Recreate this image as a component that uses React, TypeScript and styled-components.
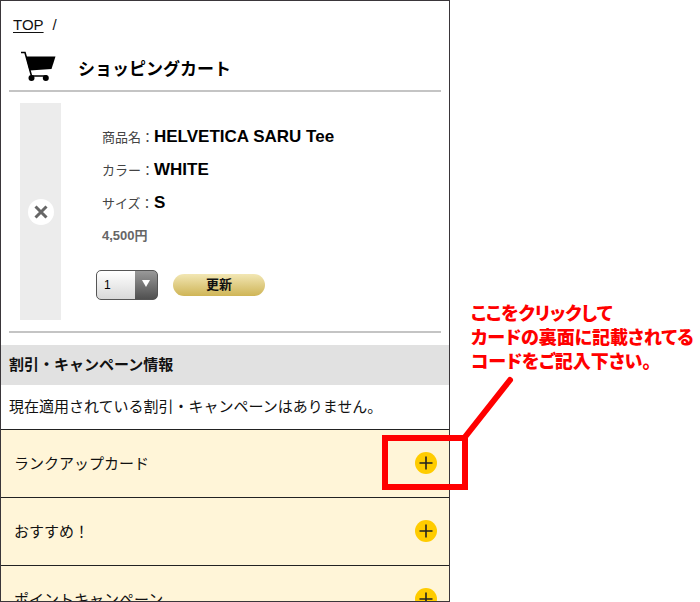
import React from "react";
import styled, { createGlobalStyle } from "styled-components";

const GlobalStyle = createGlobalStyle`
  *, *::before, *::after { box-sizing: border-box; }
  body {
    margin: 0;
    background: #fff;
    color: #111;
    font-family: "Liberation Sans", "Noto Sans CJK JP", sans-serif;
    font-size: 15px;
  }
  h1, h2, p, dl, dd, ul { margin: 0; padding: 0; }
`;

const Page = styled.div`
  display: grid;
  grid-template-columns: 9fr 5fr;
  height: 100vh;
`;

const Screen = styled.main`
  position: relative;
  z-index: 1;
  min-width: 0;
  height: 100vh;
  border: 1px solid #3a363a;
  overflow-x: visible;
  overflow-y: clip;
`;

const Breadcrumb = styled.nav`
  display: flex;
  gap: 9px;
  padding: 12px 12px 0;
  line-height: 24px;
`;

const CrumbLink = styled.a`
  color: #111;
  text-underline-offset: 2px;
`;

const TitleBar = styled.header`
  display: flex;
  align-items: flex-end;
  gap: 22px;
  margin: 0 8px;
  padding: 14px 0 9px 11px;
  border-bottom: 2px solid #c4c4c4;
`;

const Title = styled.h1`
  font-size: 17px;
  line-height: 22px;
  font-weight: 700;
  color: #000;
`;

const Product = styled.section`
  display: flex;
  margin: 0 8px;
  padding: 11px 0 11px 11px;
  border-bottom: 2px solid #c4c4c4;
`;

const RemoveButton = styled.button`
  display: flex;
  align-items: center;
  justify-content: center;
  width: 41px;
  padding: 0;
  border: 0;
  background: #ececec;
  cursor: pointer;
`;

const Details = styled.div`
  padding: 17px 0 20px 35px;
`;

const Specs = styled.dl`
  padding-left: 6px;
`;

const Spec = styled.div`
  display: flex;
  align-items: baseline;
  height: 33px;
  line-height: 33px;
`;

const SpecName = styled.dt`
  width: 52px;
  font-size: 13px;
  color: #444;
  white-space: nowrap;
`;

const SpecValue = styled.dd`
  font-size: 17px;
  font-weight: 700;
  color: #000;
`;

const Price = styled.p`
  height: 33px;
  padding-left: 6px;
  font-size: 13px;
  line-height: 33px;
  font-weight: 700;
  color: #666;
`;

const QuantityForm = styled.form`
  display: flex;
  align-items: center;
  gap: 15px;
  margin-top: 18px;
`;

const QuantityBox = styled.label`
  position: relative;
  display: block;
  width: 62px;
  height: 30px;
`;

const Quantity = styled.select`
  width: 100%;
  height: 100%;
  padding: 0 0 0 7px;
  appearance: none;
  border: 1px solid #555;
  border-radius: 5px;
  background:
    linear-gradient(#999, #505050) right / 22px 100% no-repeat,
    linear-gradient(#fff, #d8d8d8);
  color: #000;
  font-family: inherit;
  font-size: 12px;
`;

const Arrow = styled.svg`
  position: absolute;
  top: 10px;
  right: 8px;
  pointer-events: none;
`;

const UpdateButton = styled.button`
  width: 92px;
  height: 22px;
  padding: 0;
  border: 0;
  border-radius: 11px;
  background: linear-gradient(#f2e7b4, #e0cd85 50%, #cfb556);
  color: #111;
  font-family: inherit;
  font-size: 13px;
  line-height: 22px;
  font-weight: 700;
  cursor: pointer;
`;

const SectionTitle = styled.h2`
  margin-top: 12px;
  padding: 0 8px;
  background: #e1e1e1;
  font-size: 15px;
  line-height: 40px;
  font-weight: 700;
`;

const Message = styled.p`
  padding: 0 8px;
  line-height: 44px;
  white-space: nowrap;
`;

const Campaigns = styled.ul`
  list-style: none;
`;

const CampaignItem = styled.li`
  position: relative;
  border-top: 1px solid #222;
`;

const CampaignButton = styled.button`
  display: flex;
  align-items: center;
  justify-content: space-between;
  width: 100%;
  height: 67px;
  padding: 0 12px 2px 13px;
  border: 0;
  background: #fff5d8;
  color: #111;
  font-family: inherit;
  font-size: 15px;
  text-align: left;
  cursor: pointer;
`;

const Highlight = styled.div`
  position: absolute;
  top: 5px;
  right: -19px;
  width: 86px;
  height: 55px;
  border: 6px solid #f00;
  pointer-events: none;
`;

const Pointer = styled.svg`
  position: absolute;
  top: -55px;
  right: -67px;
  pointer-events: none;
`;

const Note = styled.aside`
  padding: 302px 0 0 21px;
  color: #f00;
  font-size: 18px;
  line-height: 24px;
  font-weight: 900;
  font-feature-settings: "palt";
  white-space: nowrap;
`;

const CartIcon = () => (
  <svg width="36" height="30" viewBox="0 0 36 30" aria-hidden="true">
    <path d="M1 1.500h4l6.500 23.500H27" fill="none" stroke="#000" strokeWidth="1.600" />
    <path d="M6 5.500h29.500L31.500 18 9.500 19.500Z" fill="#000" />
    <circle cx="11.500" cy="27" r="3" fill="#000" />
    <circle cx="25.800" cy="27" r="3" fill="#000" />
  </svg>
);

const RemoveIcon = () => (
  <svg width="26" height="26" viewBox="0 0 26 26" aria-hidden="true">
    <circle cx="13" cy="13" r="13" fill="#fff" />
    <path d="M7.500 7.500l11 11M18.500 7.500l-11 11" stroke="#666" strokeWidth="3" />
  </svg>
);

const PlusIcon = () => (
  <svg width="22" height="22" viewBox="0 0 22 22" aria-hidden="true">
    <circle cx="11" cy="11" r="11" fill="#fc0" />
    <path d="M4.500 11h13M11 4.500v13" stroke="#222" strokeWidth="1.600" />
  </svg>
);

const specs = [
  { name: "商品名：", value: "HELVETICA SARU Tee" },
  { name: "カラー：", value: "WHITE" },
  { name: "サイズ：", value: "S" },
];

const campaigns = [
  { label: "ランクアップカード", highlighted: true },
  { label: "おすすめ！", highlighted: false },
  { label: "ポイントキャンペーン", highlighted: false },
];

export default function App() {
  return (
    <Page lang="ja">
      <GlobalStyle />
      <Screen>
        <Breadcrumb>
          <CrumbLink href="#">TOP</CrumbLink>
          <span>/</span>
        </Breadcrumb>
        <TitleBar>
          <CartIcon />
          <Title>ショッピングカート</Title>
        </TitleBar>
        <Product>
          <RemoveButton type="button" aria-label="削除">
            <RemoveIcon />
          </RemoveButton>
          <Details>
            <Specs>
              {specs.map((spec) => (
                <Spec key={spec.name}>
                  <SpecName>{spec.name}</SpecName>
                  <SpecValue>{spec.value}</SpecValue>
                </Spec>
              ))}
            </Specs>
            <Price>4,500円</Price>
            <QuantityForm onSubmit={(event) => event.preventDefault()}>
              <QuantityBox>
                <Quantity aria-label="数量" defaultValue="1">
                  <option>1</option>
                  <option>2</option>
                  <option>3</option>
                </Quantity>
                <Arrow width="8" height="7" viewBox="0 0 8 7" aria-hidden="true">
                  <path d="M0 0h8L4 7Z" fill="#fff" />
                </Arrow>
              </QuantityBox>
              <UpdateButton type="submit">更新</UpdateButton>
            </QuantityForm>
          </Details>
        </Product>
        <SectionTitle>割引・キャンペーン情報</SectionTitle>
        <Message>現在適用されている割引・キャンペーンはありません。</Message>
        <Campaigns>
          {campaigns.map((campaign) => (
            <CampaignItem key={campaign.label}>
              <CampaignButton type="button" aria-expanded={false}>
                {campaign.label}
                <PlusIcon />
              </CampaignButton>
              {campaign.highlighted && (
                <>
                  <Highlight />
                  <Pointer width="54" height="64" viewBox="0 0 54 64" aria-hidden="true">
                    <path d="M48 5L3 62" stroke="#f00" strokeWidth="6" strokeLinecap="round" />
                  </Pointer>
                </>
              )}
            </CampaignItem>
          ))}
        </Campaigns>
      </Screen>
      <Note>
        ここをクリックして
        <br />
        カードの裏面に記載されてる
        <br />
        コードをご記入下さい。
      </Note>
    </Page>
  );
}
